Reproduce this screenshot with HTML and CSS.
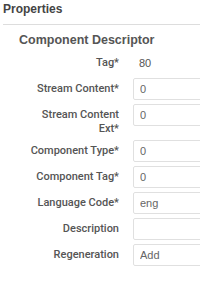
FILE: index.html
```html
<!DOCTYPE html>
<html lang="en">
<head>
  <meta charset="UTF-8" />
  <title>Properties</title>
  <link rel="stylesheet" href="styles.css">
</head>
<body>
  <div class="panel-title">Properties</div>

  <div class="section">
    <h3>Component Descriptor</h3>
    <form class="props">
      <div class="row">
        <label>Tag*</label>
        <span class="value">80</span>
      </div>
      <div class="row">
        <label>Stream Content*</label>
        <input type="text" value="0" />
      </div>
      <div class="row">
        <label>Stream Content Ext*</label>
        <input type="text" value="0" />
      </div>
      <div class="row">
        <label>Component Type*</label>
        <input type="text" value="0" />
      </div>
      <div class="row">
        <label>Component Tag*</label>
        <input type="text" value="0" />
      </div>
      <div class="row">
        <label>Language Code*</label>
        <input type="text" value="eng" />
      </div>
      <div class="row">
        <label>Description</label>
        <input type="text" value="" />
      </div>
      <div class="row">
        <label>Regeneration</label>
        <input type="text" value="Add" />
      </div>
    </form>
  </div>
</body>
</html>
```

FILE: styles.css
```css
* { box-sizing: border-box; }

html, body {
  overflow: hidden;
}

body {
  margin: 0;
  background: #fff;
  font-family: 'Liberation Sans', Arial, sans-serif;
  color: #555;
}

.panel-title {
  margin-left: 3px;
  padding: 1px 0 7px;
  font-size: 12px;
  line-height: 16px;
  font-weight: bold;
  color: #444;
  border-bottom: 1px solid #ddd;
}

.section h3 {
  margin: 7px 0 4px 19px;
  font-size: 12.5px;
  line-height: 16px;
  color: #555;
}

.row {
  display: grid;
  grid-template-columns: 96px 1fr;
  column-gap: 14px;
  align-items: start;
  padding-left: 23px;
  margin-bottom: 4px;
  overflow: hidden;
}

.row label {
  text-align: right;
  font-family: Roboto, 'Liberation Sans', sans-serif;
  font-size: 11px;
  line-height: 14px;
  font-weight: 500;
  padding-top: 4px;
  color: #555;
}

.value {
  display: block;
  height: 22px;
  line-height: 22px;
  padding-left: 6px;
  font-size: 11px;
  color: #555;
}

.row input {
  width: calc(100% + 10px);
  height: 22px;
  padding: 0 6px;
  border: 1px solid #e0e0e0;
  border-radius: 2px;
  font-family: inherit;
  font-size: 11px;
  color: #666;
  background: #fff;
}
```
